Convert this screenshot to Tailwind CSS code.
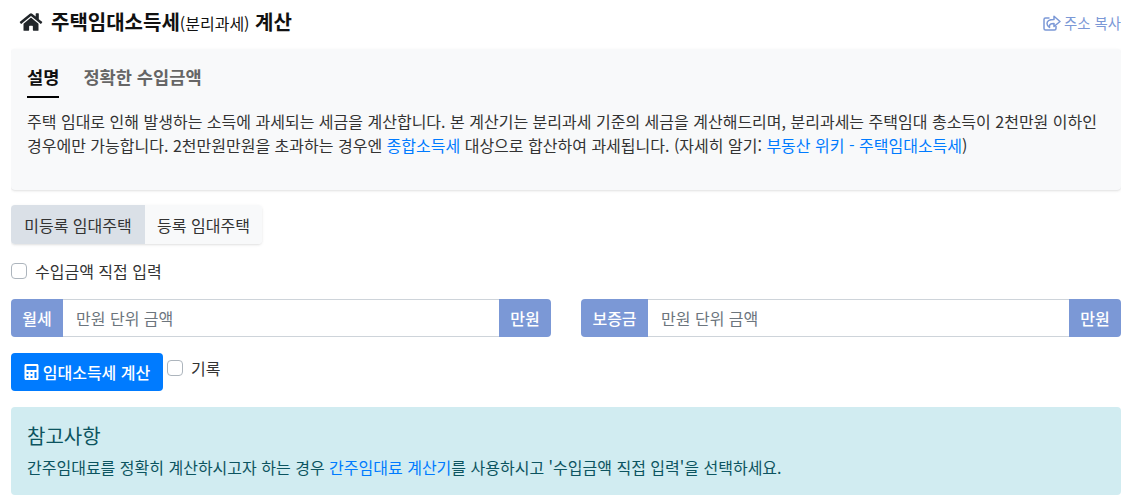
<!DOCTYPE html>
<html lang="ko"><head><meta charset="utf-8">
<script src="https://cdn.jsdelivr.net/npm/@tailwindcss/browser@4"></script>
</head>
<body class="bg-white overflow-hidden font-['Noto_Sans_CJK_KR','Noto_Sans',sans-serif] text-[16px] text-[#212529]">
<div class="h-[504px] w-[1110px] ml-[11px] overflow-hidden">
<header class="flex items-center justify-between h-[43px] pl-[8px]">
<div class="flex items-center gap-[8px]">
<svg class="w-[24px] h-[20px]" viewBox="0 0 576 512" fill="#212529"><path d="M280.4 148.3 96 300.1V464a16 16 0 0 0 16 16l112-.3a16 16 0 0 0 15.9-16V368a16 16 0 0 1 16-16h64a16 16 0 0 1 16 16v95.6a16 16 0 0 0 16 16l112 .4a16 16 0 0 0 16-16V300L295.700 148.300a12.200 12.200 0 0 0-15.300 0zM571.600 251.500 488 182.600V44.100a12 12 0 0 0-12-12h-56a12 12 0 0 0-12 12v72.600L318.500 43a48 48 0 0 0-61 0L4.300 251.500a12 12 0 0 0-1.600 16.900l25.500 31A12 12 0 0 0 45.200 301l235.200-193.700a12.200 12.200 0 0 1 15.300 0L530.900 301a12 12 0 0 0 16.900-1.600l25.500-31a12 12 0 0 0-1.700-16.900z"/></svg>
<h1 class="font-bold text-[20px] leading-none text-[#111]">주택임대소득세<span class="font-normal text-[16px]">(분리과세)</span> 계산</h1>
</div>
<a class="flex items-center gap-[3px] text-[#7b98d6] text-[14.4px] mt-[3px]"><svg class="w-[18px] h-[16px]" viewBox="0 0 18 16" fill="none" stroke="#7b98d6"><path stroke-width="1.500" d="M6.500 3H2.500A1.500 1.500 0 0 0 1 4.500v9A1.500 1.500 0 0 0 2.500 15h9a1.500 1.500 0 0 0 1.500-1.500V11"/><path stroke-width="1.500" stroke-linejoin="round" d="M11 1.200 17 6.500 11 11.500V8.500C8 8.500 6 9 6.500 12.500 4.500 11 4 9.500 4 8.500 4 5.500 7 4.500 11 4.500Z"/></svg>주소 복사</a>
</header>
<section class="h-[141px] mt-[6px] bg-[#f8f9fa] rounded-[4px] shadow-sm pt-[13px] px-[16px]">
<div class="flex gap-[24px] font-bold text-[17.6px] text-[#666]">
<span class="text-[#111] border-b-2 border-black h-[36px] leading-[30px]">설명</span><span class="leading-[30px]">정확한 수입금액</span>
</div>
<p class="mt-[11px] leading-[24px] text-[#333]">주택 임대로 인해 발생하는 소득에 과세되는 세금을 계산합니다. 본 계산기는 분리과세 기준의 세금을 계산해드리며, 분리과세는 주택임대 총소득이 2천만원 이하인 경우에만 가능합니다. 2천만원만원을 초과하는 경우엔 <a class="text-[#007bff]">종합소득세</a> 대상으로 합산하여 과세됩니다. (자세히 알기: <a class="text-[#007bff]">부동산 위키 - 주택임대소득세</a>)</p>
</section>
<div class="mt-[15px] inline-flex h-[39px] rounded-[4px] shadow-sm text-[#333] align-top">
<div class="w-[134px] flex items-center justify-center bg-[#dae0e7] rounded-l-[4px]">미등록 임대주택</div>
<div class="w-[117px] flex items-center justify-center bg-[#f8f9fa] rounded-r-[4px]">등록 임대주택</div>
</div>
<label class="flex items-center gap-[8px] mt-[15px] h-[24px] text-[#333]"><span class="w-[16px] h-[16px] border border-[#adb5bd] rounded-[4px] bg-white"></span>수입금액 직접 입력</label>
<div class="grid grid-cols-2 gap-[30px] mt-[16px]">
<div class="flex h-[38px]">
<span class="w-[52px] flex items-center justify-center bg-[#7b98d6] text-white font-medium rounded-l-[4px]">월세</span>
<span class="flex-1 border-y border-[#ced4da] flex items-center px-[13px] text-[#6c757d]">만원 단위 금액</span>
<span class="w-[52px] flex items-center justify-center bg-[#7b98d6] text-white font-medium rounded-r-[4px]">만원</span>
</div>
<div class="flex h-[38px]">
<span class="w-[67px] flex items-center justify-center bg-[#7b98d6] text-white font-medium rounded-l-[4px]">보증금</span>
<span class="flex-1 border-y border-[#ced4da] flex items-center px-[13px] text-[#6c757d]">만원 단위 금액</span>
<span class="w-[52px] flex items-center justify-center bg-[#7b98d6] text-white font-medium rounded-r-[4px]">만원</span>
</div>
</div>
<div class="flex items-center mt-[16px] h-[38px]">
<button class="bg-[#007bff] text-white h-[38px] w-[152px] rounded-[4px] flex items-center justify-center gap-[4px] font-medium"><svg class="w-[15px] h-[16px]" viewBox="0 0 448 512" fill="#fff"><path d="M400 0H48C22 0 0 22 0 48v416c0 26 22 48 48 48h352c26 0 48-22 48-48V48c0-26-22-48-48-48zM128 435c0 7-6 13-13 13H77c-7 0-13-6-13-13v-38c0-7 6-13 13-13h38c7 0 13 6 13 13zm0-128c0 7-6 13-13 13H77c-7 0-13-6-13-13v-38c0-7 6-13 13-13h38c7 0 13 6 13 13zm128 128c0 7-6 13-13 13h-38c-7 0-13-6-13-13v-38c0-7 6-13 13-13h38c7 0 13 6 13 13zm0-128c0 7-6 13-13 13h-38c-7 0-13-6-13-13v-38c0-7 6-13 13-13h38c7 0 13 6 13 13zm128 128c0 7-6 13-13 13h-38c-7 0-13-6-13-13V269c0-7 6-13 13-13h38c7 0 13 6 13 13zm0-256c0 7-6 13-13 13H77c-7 0-13-6-13-13V77c0-7 6-13 13-13h294c7 0 13 6 13 13z"/></svg>임대소득세 계산</button>
<label class="flex items-center gap-[8px] ml-[4px] text-[#333] mt-[-8px]"><span class="w-[16px] h-[16px] border border-[#adb5bd] rounded-[4px] bg-white"></span>기록</label>
</div>
<section class="mt-[16px] h-[88px] bg-[#d1ecf1] rounded-[4px] px-[16px] pt-[14px] text-[#0c5460]">
<h2 class="text-[20px] leading-[30px]">참고사항</h2>
<p class="leading-[24px] mt-[4px]">간주임대료를 정확히 계산하시고자 하는 경우 <a class="text-[#007bff]">간주임대료 계산기</a>를 사용하시고 '수입금액 직접 입력'을 선택하세요.</p>
</section>
</div>
</body></html>
